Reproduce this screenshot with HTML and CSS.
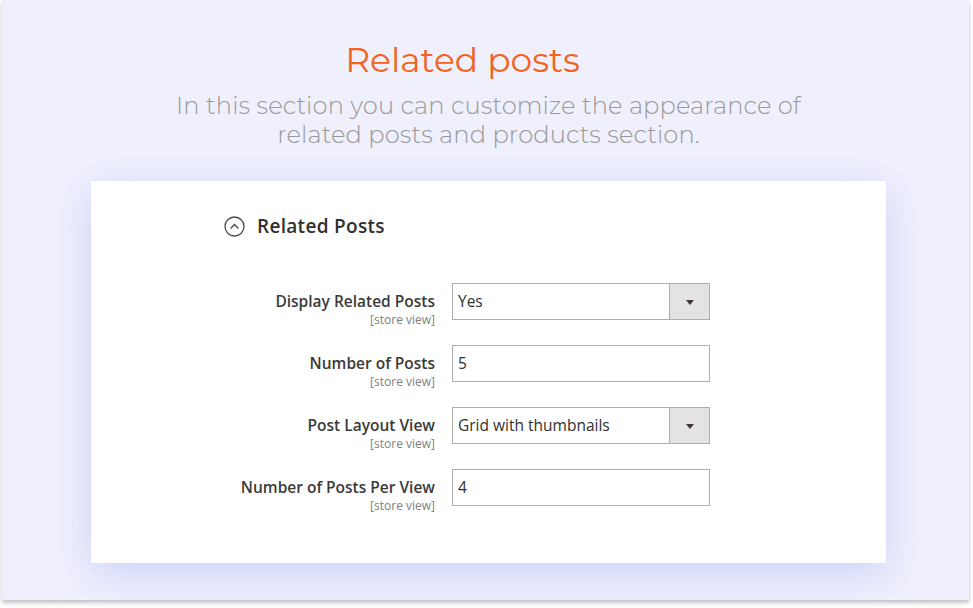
FILE: index.html
```html
<!DOCTYPE html>
<html>
<head>
<meta charset="utf-8">
<link rel="stylesheet" href="styles.css">
</head>
<body>
<div class="panel">
  <h1 class="title">Related posts</h1>
  <p class="subtitle">In this section you can customize the appearance of<br>related posts and products section.</p>
  <div class="card">
    <div class="section-head">
      <svg class="toggle" width="21" height="21" viewBox="0 0 21 21">
        <circle cx="10.5" cy="10.5" r="9.5" fill="none" stroke="#514943" stroke-width="1.3"/>
        <path d="M6.6 12.4 L10.5 8.6 L14.4 12.4" fill="none" stroke="#514943" stroke-width="1.4"/>
      </svg>
      <span class="section-title">Related Posts</span>
    </div>
    <div class="form">
      <div class="row">
        <div class="label"><span class="name">Display Related Posts</span><span class="scope">[store view]</span></div>
        <div class="select"><span class="value">Yes</span><span class="btn"><span class="arrow"></span></span></div>
      </div>
      <div class="row">
        <div class="label"><span class="name">Number of Posts</span><span class="scope">[store view]</span></div>
        <div class="input"><span class="value">5</span></div>
      </div>
      <div class="row">
        <div class="label"><span class="name">Post Layout View</span><span class="scope">[store view]</span></div>
        <div class="select"><span class="value">Grid with thumbnails</span><span class="btn"><span class="arrow"></span></span></div>
      </div>
      <div class="row">
        <div class="label"><span class="name">Number of Posts Per View</span><span class="scope">[store view]</span></div>
        <div class="input"><span class="value">4</span></div>
      </div>
    </div>
  </div>
</div>
</body>
</html>
```

FILE: styles.css
```css
html, body {
  margin: 0;
  padding: 0;
  background: #ffffff;
}
body {
  width: 973px;
  height: 608px;
  overflow: hidden;
}
.panel {
  margin: 0 4px 0 2px;
  height: 600px;
  background: #f0f0fd;
  box-shadow: 0 3px 4px rgba(0, 0, 0, 0.22), 0 0 2px rgba(0, 0, 0, 0.08);
  display: flex;
  flex-direction: column;
  align-items: center;
  box-sizing: border-box;
  padding-top: 38px;
}
.title {
  margin: 0 46px 0 0;
  font-family: "Montserrat", "Open Sans", sans-serif;
  font-weight: 400;
  font-size: 34.5px;
  line-height: 44px;
  color: #f26322;
}
.subtitle {
  margin: 9px 0 0 6px;
  font-family: "Montserrat", "Open Sans", sans-serif;
  font-weight: 300;
  font-size: 24.2px;
  line-height: 29px;
  color: #999999;
  text-align: center;
  letter-spacing: 0.1px;
}
.card {
  margin-top: 32px;
  margin-left: 6px;
  width: 795px;
  height: 382px;
  background: #ffffff;
  box-shadow: 0 10px 40px rgba(180, 188, 245, 0.6);
  box-sizing: border-box;
  padding: 34px 0 0 0;
  font-family: "Open Sans", sans-serif;
}
.section-head {
  display: flex;
  align-items: center;
  padding-left: 133px;
  height: 22px;
}
.toggle {
  display: block;
}
.section-title {
  margin-left: 12px;
  font-size: 19px;
  font-weight: 600;
  color: #303030;
  letter-spacing: 0.3px;
}
.form {
  margin-top: 46px;
  display: flex;
  flex-direction: column;
  gap: 25px;
}
.row {
  display: flex;
  align-items: flex-start;
  gap: 17px;
  height: 37px;
}
.label {
  width: 344px;
  display: flex;
  flex-direction: column;
  align-items: flex-end;
  padding-top: 8px;
}
.name {
  font-size: 15.5px;
  font-weight: 600;
  color: #3a3a3a;
  line-height: 20px;
}
.scope {
  font-size: 12px;
  color: #808080;
  line-height: 15px;
  margin-top: 1px;
}
.select, .input {
  width: 258px;
  height: 37px;
  box-sizing: border-box;
  border: 1px solid #adadad;
  display: flex;
  align-items: stretch;
  background: #fff;
}
.value {
  flex: 1;
  padding-left: 5px;
  font-size: 15.5px;
  color: #303030;
  line-height: 35px;
}
.btn {
  width: 39px;
  background: #e3e3e3;
  border-left: 1px solid #adadad;
  display: flex;
  align-items: center;
  justify-content: center;
}
.arrow {
  width: 0;
  height: 0;
  border-left: 4.5px solid transparent;
  border-right: 4.5px solid transparent;
  border-top: 5px solid #41362f;
  margin-top: 1px;
}
```
